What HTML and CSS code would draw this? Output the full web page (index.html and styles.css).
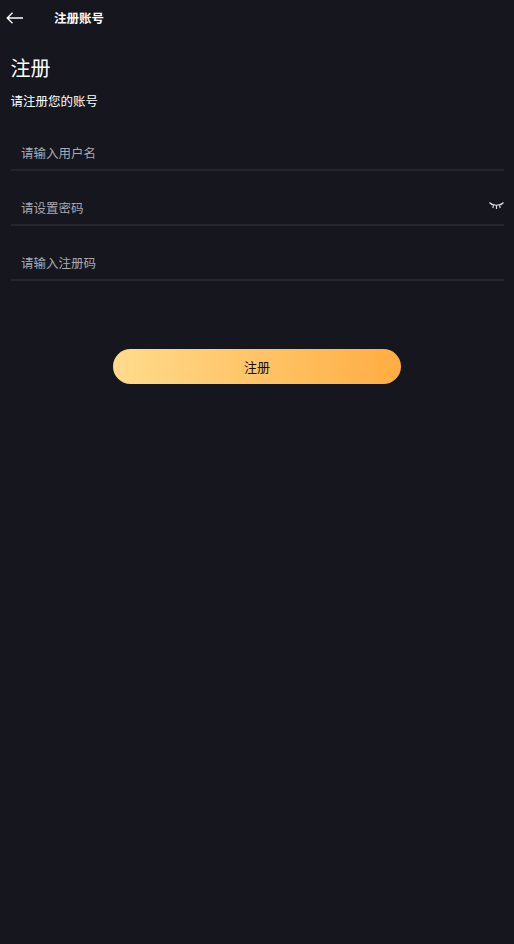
FILE: index.html
```html
<!DOCTYPE html>
<html lang="zh-CN">
<head>
    <meta charset="UTF-8">
    <meta name="viewport" content="width=device-width, initial-scale=1.0">
    <title>注册账号</title>
    <link rel="stylesheet" href="styles.css">
</head>
<body>

<header class="topbar">
    <svg class="back-icon" width="17" height="12" viewBox="0 0 17 12">
        <path d="M6.5 0.8 L1.2 6 L6.5 11.2 M1.2 6 H17" fill="none" stroke="#fff" stroke-width="1.3"/>
    </svg>
    <span class="topbar-title">注册账号</span>
</header>

<main class="content">
    <h1 class="page-title">注册</h1>
    <p class="page-sub">请注册您的账号</p>

    <div class="field"><span class="hint">请输入用户名</span></div>
    <div class="field">
        <span class="hint">请设置密码</span>
        <!-- 闭眼图标 -->
        <svg class="eye-icon" width="15" height="8" viewBox="0 0 15 8">
            <path d="M1 1 C4 4 11 4 14 1 M0.5 0.5 L3 2.8 M4.5 3.2 L3.8 6 M7.5 3.5 V7 M10.5 3.2 L11.2 6 M14.5 0.5 L12 2.8" fill="none" stroke="#dcdcdc" stroke-width="1.2"/>
        </svg>
    </div>
    <div class="field"><span class="hint">请输入注册码</span></div>

    <button class="submit">注册</button>
</main>

</body>
</html>
```

FILE: styles.css
```css
body { margin: 0; width: 514px; height: 944px; background-color: #15161e; color: #fff; font-family: "Noto Sans CJK SC", "Noto Sans", sans-serif; overflow: hidden; }
.topbar { display: flex; align-items: center; height: 36px; padding-left: 6px; }
.back-icon { display: block; }
.topbar-title { margin-left: 31px; font-size: 12.5px; font-weight: 700; line-height: 36px; }
.content { display: flex; flex-direction: column; padding: 0 10px; }
.page-title { margin: 17px 0 0 0.5px; font-size: 20px; font-weight: 400; line-height: 30px; }
.page-sub { margin: 9px 0 0 0.5px; font-size: 12.5px; line-height: 18px; }
.field { display: flex; align-items: center; justify-content: space-between; height: 39px; margin: 14px 0 0 1px; padding-left: 10px; border-bottom: 2px solid #25272e; }
.field:first-of-type { margin-top: 20px; }
.hint { font-size: 12.5px; color: #a9a9b0; line-height: 18px; padding-top: 6px; }
.eye-icon { display: block; margin-top: 3px; }
.submit { align-self: center; width: 288px; height: 35px; margin-top: 68px; padding: 0 0 1px; border: none; border-radius: 18px; background: linear-gradient(90deg, #ffdb8c, #ffad42); color: #111; font-family: inherit; font-size: 13px; }
```
